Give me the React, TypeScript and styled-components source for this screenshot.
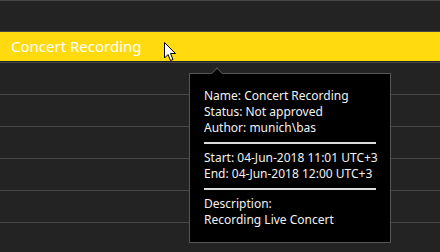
import React from "react";
import styled, { createGlobalStyle } from "styled-components";

const Global = createGlobalStyle`
  html, body { margin: 0; padding: 0; background: #232323; }
  body { width: 440px; height: 252px; overflow: hidden; }
`;

const Page = styled.div`
  position: relative;
  width: 440px;
  height: 252px;
  background: #232323;
  font-family: "Noto Sans", "Open Sans", sans-serif;
`;

const List = styled.div`
  display: flex;
  flex-direction: column;
  border-top: 1px solid #474747;
`;

const Row = styled.div<{ $h: number; $highlight?: boolean }>`
  height: ${(p) => p.$h}px;
  border-bottom: 1px solid #474747;
  display: flex;
  align-items: center;
  padding-bottom: ${(p) => (p.$highlight ? 1 : 0)}px;
  background: ${(p) => (p.$highlight ? "#ffda0f" : "transparent")};
  background-clip: content-box;
  box-sizing: content-box;
`;

const RowLabel = styled.span`
  color: #ffffff;
  font-size: 15px;
  line-height: 29px;
  padding-left: 11px;
`;

const Tooltip = styled.div`
  position: absolute;
  left: 189px;
  top: 73px;
  width: 202px;
  height: 170px;
  box-sizing: border-box;
  background: #000;
  border: 1px solid #575757;
  padding: 14px 14px 13px 14px;
  display: flex;
  flex-direction: column;
  color: #f2f2f2;
  font-size: 12px;
  line-height: 16px;
`;

const Arrow = styled.div`
  position: absolute;
  left: 22.5px;
  top: -5.5px;
  width: 7px;
  height: 7px;
  background: #000;
  border-top: 1px solid #575757;
  border-left: 1px solid #575757;
  transform: rotate(45deg);
`;

const Line = styled.div`
  white-space: nowrap;
`;

const Separator = styled.div`
  height: 2px;
  background: #dcdcdc;
  margin: 6px 0;
`;

const Cursor = styled.svg`
  position: absolute;
  left: 164px;
  top: 42px;
`;

export default function App() {
  return (
    <Page>
      <Global />
      <List>
        <Row $h={30} />
        <Row $h={29} $highlight>
          <RowLabel>Concert Recording</RowLabel>
        </Row>
        <Row $h={31} />
        <Row $h={31} />
        <Row $h={31} />
        <Row $h={31} />
        <Row $h={31} />
      </List>
      <Cursor width="13" height="20" viewBox="0 0 13 20">
        <polygon
          points="0.5,0.5 0.5,16 4,12.5 6.5,18.5 9,17.5 6.5,11.5 11.5,11.5"
          fill="#fff"
          stroke="#000"
          strokeWidth="1"
          strokeLinejoin="miter"
        />
      </Cursor>
      <Tooltip>
        <Arrow />
        <Line>Name: Concert Recording</Line>
        <Line>Status: Not approved</Line>
        <Line>Author: munich\bas</Line>
        <Separator />
        <Line>Start: 04-Jun-2018 11:01 UTC+3</Line>
        <Line>End: 04-Jun-2018 12:00 UTC+3</Line>
        <Separator />
        <Line>Description:</Line>
        <Line>Recording Live Concert</Line>
      </Tooltip>
    </Page>
  );
}
